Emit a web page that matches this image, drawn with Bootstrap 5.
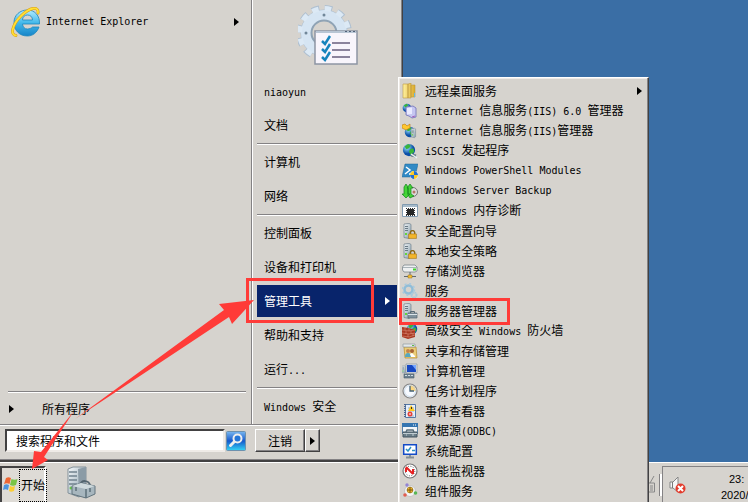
<!DOCTYPE html>
<html lang="zh-CN">
<head>
<meta charset="utf-8">
<meta name="viewport" content="width=device-width, initial-scale=1">
<title>开始菜单</title>
<link href="https://cdn.jsdelivr.net/npm/bootstrap@5.3.0/dist/css/bootstrap.min.css" rel="stylesheet">
<style>
:root{--face:#d6d3ce;--navy:#08246b;--dark:#424142;--shade:#848284;--red:#ff3b38}
body{background:#3a6ea5;color:#000;font-family:"Noto Sans CJK SC","Liberation Sans",sans-serif;font-size:12px;line-height:20px}
a,a:hover{color:inherit;text-decoration:none}
.en{font-family:"DejaVu Sans Mono",monospace;font-size:10px;white-space:pre}
.start-menu{width:403px;background:var(--face);border-right:1px solid var(--dark);border-bottom:2px solid var(--dark);box-shadow:inset -1px -1px var(--shade)}
.programs{width:253px;border-right:1px solid #fff;box-shadow:inset -1px 0 var(--shade);padding-right:6px}
.rule{height:2px;background:var(--shade);border-bottom:1px solid #fff;flex:none}
.places{padding:0 5px 0 4px}
.places .rule{margin-top:1px}
.place{height:32px;margin:1px 0;padding:0 7px;line-height:32px}
.place:hover,.place.chosen{background:var(--navy);color:#fff}
.user-tile{height:74px;padding:4px 0 0 41px}
.tri{width:0;height:0;border:4px solid transparent;border-left:5px solid currentColor;border-right:0}
.ie-row{padding:6px 7px 0 11px;gap:5px}
.all-row{height:31px;padding-left:9px;gap:28px}
.search-row{height:34px;padding:3px 0 0 5px}
.find{height:23px;border:2px solid;border-color:var(--dark) #efebe7 #efebe7 var(--dark);border-radius:0;background:#fff;padding:0 9px;font-size:12px;line-height:18px;color:#000}
.find::placeholder{color:#000;opacity:1}
.raised{background:var(--face);border:1px solid;border-color:#fff var(--dark) var(--dark) #fff;box-shadow:inset -1px -1px var(--shade);border-radius:0;font-size:12px;line-height:18px;color:#000;height:23px;padding:0}
.search-box{width:242px}
.find-btn{background:none;border:0;padding:0;line-height:0}
.taskbar{height:40px;background:var(--face);border-top:1px solid #fff;padding-top:3px}
.start-btn{width:46px;border:2px solid;border-color:var(--dark) #fff #fff var(--dark);border-bottom:0;background:#dedbd6;padding:1px 0 0 1px;color:#000}
.start-btn .face{border:1px dotted #000;height:33px;line-height:30px;padding:0 1px;font-size:12px}
.tray{width:86px;border:1px solid var(--shade);border-width:1px 0 0 1px;padding-left:6px}
.clock{font:11px/16px "Liberation Sans",sans-serif;padding-left:35px;white-space:nowrap}
.grip{width:3px;height:22px;border-left:1px solid var(--shade);border-right:2px solid #fff}
.tools{left:398px;top:77px;width:251px;z-index:5;background:var(--face);border:1px solid;border-color:#fff var(--dark) var(--dark) #fff;box-shadow:inset -1px 0 var(--shade),inset 1px 1px #efebe7;padding:3px 6px 3px 3px}
.tools a{height:20px;gap:7px;white-space:nowrap}
.tools svg{flex:none}
.notes{left:0;top:0;z-index:9;pointer-events:none}
</style>
<script src="https://cdn.jsdelivr.net/npm/bootstrap@5.3.0/dist/js/bootstrap.bundle.min.js"></script>
</head>
<body class="vh-100 overflow-hidden position-relative d-flex flex-column">
<svg width="0" height="0" class="position-absolute" aria-hidden="true">
<defs>
<linearGradient id="steel" x2="1" y2="1"><stop stop-color="#f4f7f9"/><stop offset="1" stop-color="#829aa8"/></linearGradient>
<linearGradient id="sky" x2="0" y2="1"><stop stop-color="#b4ecff"/><stop offset=".5" stop-color="#42b8ea"/><stop offset="1" stop-color="#1784c8"/></linearGradient>
<linearGradient id="gold" x2="1"><stop stop-color="#fff2a0"/><stop offset="1" stop-color="#dba928"/></linearGradient>
<radialGradient id="earth" cx=".35" cy=".3"><stop stop-color="#9ee8ff"/><stop offset="1" stop-color="#0b4fa8"/></radialGradient>
<symbol id="tower" viewBox="0 0 16 16"><path fill="url(#steel)" stroke="#70818c" stroke-width=".7" d="M2 1l5-.6 2 1V14l-2 1.500-5-1z"/><path stroke="#6a7b86" d="M3 3.500h3M3 5.500h3M3 7.500h3"/><path fill="#64d53c" d="M3 10h2v2H3z"/></symbol>
<symbol id="globe" viewBox="0 0 16 16"><circle cx="8" cy="8" r="7" fill="url(#earth)"/><path fill="#38b43a" d="M3 4l4-3 3 2-2 3-3 1zM9 7l4-1 1 4-4 4-2-4z"/></symbol>
<symbol id="lock" viewBox="0 0 8 8"><path d="M2 4V2.500a2 2 0 014 0V4" fill="none" stroke="#8b6914" stroke-width="1.200"/><path fill="#f2b62c" stroke="#a2710e" stroke-width=".5" d="M.5 3.500h7v4h-7z"/></symbol>
</defs></svg>

<main class="start-menu flex-grow-1 position-relative d-flex flex-column">
<div class="d-flex flex-grow-1">
<nav class="programs d-flex flex-column flex-shrink-0" aria-label="程序">
<a href="#" class="ie-row d-flex align-items-center">
<svg width="30" height="32" viewBox="0 0 30 32"><path fill="url(#sky)" stroke="#1d87bd" stroke-width=".8" fill-rule="evenodd" d="M28.500 18H11.500c.3 3 2 5 5 5 2 0 4-1 5-2h6.500c-2 5.500-6 9-11.500 9C8 30 3 24 3 16.500S9 4 16.500 4 29 10 28.500 18zM11.500 14h10c0-3-2-5-5-5s-5 2-5 5z"/><path fill="none" stroke="#d99a10" stroke-width="2.800" stroke-linecap="round" d="M5 29.500C-1 29 1 19 10 10S28 0 27 7"/><path fill="none" stroke="#ffdf35" stroke-width="1.800" stroke-linecap="round" d="M5 29.500C-1 29 1 19 10 10S28 0 27 7"/></svg>
<span class="en flex-grow-1">Internet Explorer</span><i class="tri"></i></a>
<div class="rule mt-auto ms-2"></div>
<a href="#" class="all-row d-flex align-items-center"><i class="tri"></i><span>所有程序</span></a>
</nav>
<nav class="places flex-grow-1 d-flex flex-column" aria-label="系统位置">
<div class="user-tile"><svg width="62" height="64" viewBox="0 0 62 64"><g transform="translate(26 29)"><circle r="18" fill="none" stroke="#aebfd0" stroke-width="11"/><circle r="25" fill="none" stroke="#aebfd0" stroke-width="6" stroke-dasharray="7.500 5.590"/><circle r="18" fill="none" stroke="#d6e5f3" stroke-width="10"/><circle r="24.500" fill="none" stroke="#dce9f5" stroke-width="5" stroke-dasharray="6.500 6.330"/><circle r="12.500" fill="none" stroke="#8fa3b5" stroke-width="2"/><g fill="#718799"><circle cx="-18" r="1.500"/><circle cy="-18" r="1.500"/></g></g><path fill="#f8f5fc" stroke="#8d95a4" stroke-width="1.500" d="M17 27h42v33H17z"/><path stroke="#b8c5d4" stroke-width="2" d="M18 28h40"/><path stroke="#506078" stroke-dasharray="2 2" d="M47 27.500h11"/><path stroke="#8b849d" stroke-width="2" d="M34 39h18M34 46h18M34 53h18"/><path fill="none" stroke="#1684bc" stroke-width="2.500" d="M24 37l3 3 5-8M24 45l3 3 5-8M24 53l3 3 5-8"/></svg></div>
<a href="#" class="place d-block"><span class="en">niaoyun</span></a>
<a href="#" class="place d-block">文档</a>
<div class="rule"></div>
<a href="#" class="place d-block">计算机</a>
<a href="#" class="place d-block">网络</a>
<div class="rule"></div>
<a href="#" class="place d-block">控制面板</a>
<a href="#" class="place d-block">设备和打印机</a>
<a href="#" class="place chosen d-flex align-items-center justify-content-between"><span>管理工具</span><i class="tri"></i></a>
<a href="#" class="place d-block">帮助和支持</a>
<a href="#" class="place d-block">运行<span class="en">...</span></a>
<div class="rule"></div>
<a href="#" class="place d-block"><span class="en">Windows </span>安全</a>
</nav>
</div>
<div class="rule me-1"></div>
<form class="search-row d-flex align-items-start">
<div class="search-box d-flex"><input class="find flex-grow-1" type="text" placeholder="搜索程序和文件" aria-label="搜索程序和文件" size="10"><button type="button" class="find-btn" aria-label="搜索"><svg width="22" height="22" viewBox="0 0 22 22"><defs><linearGradient id="blue" x2="0" y2="1"><stop stop-color="#7ab8f0"/><stop offset=".5" stop-color="#1458cc"/><stop offset="1" stop-color="#35d5f4"/></linearGradient></defs><rect x="1.500" y="1.500" width="19" height="19" rx="1" fill="url(#blue)" stroke="#6d91ae"/><path stroke="#eee" stroke-width="3" stroke-linecap="round" d="M5.500 15.500l4-4"/><circle cx="12.500" cy="8.500" r="4" fill="#2476d8" stroke="#eee" stroke-width="2"/></svg></button></div>
<div class="d-flex ms-2"><button type="button" class="raised px-2"><span class="px-1">注销</span></button><button type="button" class="raised px-1" aria-label="更多"><i class="tri d-block"></i></button></div>
</form>

<nav class="tools position-absolute" aria-label="管理工具">
<a href="#" class="d-flex align-items-center"><svg width="16" height="16"><path fill="url(#gold)" stroke="#bd9941" stroke-width=".6" d="M1 1h5v14H1zM6 1l3-1v15H6zM9 2h4v12H9z"/><path stroke="#63b7e7" d="M12.500 10v4"/></svg><span class="flex-grow-1">远程桌面服务</span><i class="tri"></i></a>
<a href="#" class="d-flex align-items-center"><svg width="16" height="16"><use href="#globe" width="10" height="10"/><path fill="#c5c6f1" stroke="#6f70b7" stroke-width=".8" d="M4 4l7-1 3 2v9l-4 1-3-2-3-1z"/><path fill="#e9eaff" d="M5 5l5-.5V11l-5 .5z"/><path stroke="#a660bb" d="M10 14l3-1"/></svg><span><span class="en">Internet </span>信息服务<span class="en">(IIS) 6.0 </span>管理器</span></a>
<a href="#" class="d-flex align-items-center"><svg width="16" height="16"><use href="#globe" x="2" y="3" width="12" height="12"/><path fill="#ffc72e" stroke="#b87913" stroke-width=".6" d="M0 2l3-1 2 2 3-2v4L4 7 0 5z"/><use href="#tower" x="8" y="4" width="10" height="12"/></svg><span><span class="en">Internet </span>信息服务<span class="en">(IIS)</span>管理器</span></a>
<a href="#" class="d-flex align-items-center"><svg width="16" height="16"><use href="#globe" width="14" height="14"/><path stroke="#6d7f8b" stroke-width="3" d="M9 12l5 1"/><path stroke="#e9f3f7" stroke-width="1.500" d="M9 11l6 4"/></svg><span><span class="en">iSCSI </span>发起程序</span></a>
<a href="#" class="d-flex align-items-center"><svg width="16" height="16"><path fill="#318ac5" stroke="#1c6795" stroke-width=".5" d="M3 1h13l-3 13H0z"/><path stroke="#fff" stroke-width="1.500" fill="none" d="M4 4l4 3-5 4M7 11h3"/><circle cx="12" cy="12" r="4" fill="#fff"/><path fill="#ffca24" d="M12 8v4H8c0-2 2-4 4-4zM12 16v-4h4c0 2-2 4-4 4z"/><path fill="#256fd1" d="M12 8c2 0 4 2 4 4h-4zM8 12h4v4c-2 0-4-2-4-4z"/></svg><span class="en">Windows PowerShell Modules</span></a>
<a href="#" class="d-flex align-items-center"><svg width="16" height="16"><circle cx="11" cy="9" r="4.500" fill="#ddd" stroke="#777"/><circle cx="12" cy="9" r="1.500" fill="#b77766"/><path fill="#43d436" stroke="#14801c" stroke-width=".7" d="M4 15l-4-4h2V4l2-3 2 3v7h2zM8 1l3 4H9v6l3 2-4 2-2-3V5H5z"/></svg><span class="en">Windows Server Backup</span></a>
<a href="#" class="d-flex align-items-center"><svg width="16" height="16"><path fill="#fff" stroke="#829bb0" d="M.5 1.500h15v12H.5z"/><path stroke="#a8bccb" stroke-width="2" d="M1 3h14"/><path fill="#262626" d="M5 6h7v6H5z"/><path stroke="#333" stroke-dasharray="1 1" d="M4 5.500h9M4 12.500h9M4.500 5v8M12.500 5v8"/></svg><span><span class="en">Windows </span>内存诊断</span></a>
<a href="#" class="d-flex align-items-center"><svg width="16" height="16"><use href="#tower" width="16" height="16"/><use href="#lock" x="6" y="7" width="9" height="9"/></svg>安全配置向导</a>
<a href="#" class="d-flex align-items-center"><svg width="16" height="16"><use href="#tower" width="16" height="16"/><use href="#lock" x="6" y="7" width="9" height="9"/></svg>本地安全策略</a>
<a href="#" class="d-flex align-items-center"><svg width="16" height="16"><path fill="#eef0f1" stroke="#7b858c" stroke-width=".8" d="M2 2h11l2 2v4l-2 1H2L.5 7V4z"/><path stroke="#aab4b9" d="M1 4.500h14"/><path stroke="#3ed42b" stroke-width="2" d="M11 6.500h3"/><path stroke="#606970" d="M8 9v4M2 13.500h12"/><path fill="#f4be36" stroke="#94701c" stroke-width=".5" d="M6 12h4v3H6z"/></svg>存储浏览器</a>
<a href="#" class="d-flex align-items-center"><svg width="16" height="16"><circle cx="6.500" cy="6.500" r="4" fill="none" stroke="#90bdd8" stroke-width="2.500"/><circle cx="6.500" cy="6.500" r="6" fill="none" stroke="#a6cae0" stroke-width="1.500" stroke-dasharray="2 2.700"/><circle cx="12" cy="12" r="2.500" fill="none" stroke="#a9c9db" stroke-width="2" stroke-dasharray="1.500 .5"/></svg>服务</a>
<a href="#" class="d-flex align-items-center"><svg width="16" height="16"><use href="#tower" width="16" height="16"/><path fill="#81939d" stroke="#566873" stroke-width=".7" d="M6 10h9v5H6z"/><path fill="none" stroke="#566873" d="M8.500 10V8.500h4V10"/><path stroke="#dce5e9" d="M6 11.500h9"/></svg>服务器管理器</a>
<a href="#" class="d-flex align-items-center"><svg width="16" height="16"><use href="#globe" x="4" width="12" height="12"/><path fill="#a93a24" d="M0 4l7 1 6 2v7l-7 2-6-2z"/><path fill="none" stroke="#e09a84" stroke-width=".5" d="M0 7l7 1 6-1M0 10l7 1 6-1M0 13l7 1 6-2M3 4v3M7 5v3M4 8v3M9 8v3M6 11v3M11 10v3"/></svg><span>高级安全<span class="en"> Windows </span>防火墙</span></a>
<a href="#" class="d-flex align-items-center"><svg width="16" height="16"><path fill="#ebcd78" stroke="#b88d2d" stroke-width=".7" d="M2 4h12l1 11H3z"/><path fill="#e4e8ea" stroke="#919ba0" stroke-width=".7" d="M1 1h12v3H1z"/><path fill="#60bc48" d="M10 2h2v1h-2z"/><circle cx="6" cy="8" r="2" fill="#c3834e"/><circle cx="10" cy="8" r="2" fill="#a66335"/><path fill="#55a7c0" d="M3 14c0-3 1-4 3-4s3 1 3 4z"/><path fill="#fff" d="M9 14l-1-3 2-1 3 3v1z"/></svg>共享和存储管理</a>
<a href="#" class="d-flex align-items-center"><svg width="16" height="16"><path fill="#e1e4e7" stroke="#87929e" stroke-width=".7" d="M4 1h11v9H4z"/><path fill="#1748c3" d="M5 2h9v7H5z"/><path fill="#75a6ff" d="M10 2h4v5z"/><use href="#tower" x="-1" y="1" width="8" height="11"/><path fill="#6d8190" stroke="#4c606d" stroke-width=".6" d="M2 11h10v4H2z"/><path stroke="#d0dce3" stroke-dasharray="2 1" d="M3 12.500h8"/></svg>计算机管理</a>
<a href="#" class="d-flex align-items-center"><svg width="16" height="16"><circle cx="8" cy="8" r="7" fill="#f7faff" stroke="#858585" stroke-width="1.200"/><path fill="#ffd77d" d="M8 2a6 6 0 016 6H8z"/><circle cx="8" cy="8" r="5.500" fill="none" stroke="#b8ccdb" stroke-width=".7"/><path stroke="#416176" stroke-width="1.300" fill="none" d="M8 3v5h4"/></svg>任务计划程序</a>
<a href="#" class="d-flex align-items-center"><svg width="16" height="16"><path fill="#e4eefb" stroke="#5679a5" d="M3.500 1.500h10v13h-10z"/><path stroke="#4b6690" stroke-width="2" stroke-dasharray="1 1" d="M3 1v14"/><path stroke="#9dafc5" d="M6 5h6M6 8h6M6 13h6"/><path fill="#ffc81e" d="M9 2l4 6H6z"/><path stroke="#333" d="M9.500 4v2"/><circle cx="8" cy="11" r="2.500" fill="#e54238"/><path stroke="#fff" d="M7 11h2"/></svg>事件查看器</a>
<a href="#" class="d-flex align-items-center"><svg width="16" height="16"><path fill="#f2f6fa" stroke="#376894" stroke-width=".8" d="M.5.5h15v10H.5z"/><path fill="#3475b1" d="M0 0h16v4H0z"/><path stroke="#fff" d="M11 2h1M13 2h1"/><path fill="#6b7e88" stroke="#425560" d="M1 9h14v5H1z"/><path fill="none" stroke="#596d78" stroke-width="1.500" d="M4 9l1-2h6l1 2"/><path stroke="#c0ccd1" d="M1 10.500h14M4 12h1M10 12h2"/></svg><span>数据源<span class="en">(ODBC)</span></span></a>
<a href="#" class="d-flex align-items-center"><svg width="16" height="16"><path fill="#fff" stroke="#144bc7" stroke-width="1.500" d="M1.700 1.700h12.600v9.600H1.700z"/><path fill="none" stroke="#2e92c4" stroke-width="1.500" d="M4 6l2 2 3-4M10 7.500h3"/><path stroke="#859097" stroke-width="2" d="M8 12v2M4 14.500h8"/></svg>系统配置</a>
<a href="#" class="d-flex align-items-center"><svg width="16" height="16"><circle cx="8" cy="8" r="7" fill="#fff" stroke="#777" stroke-width="1.200"/><circle cx="8" cy="8" r="4.800" fill="none" stroke="#555" stroke-dasharray="1 1.500"/><path stroke="#e42222" stroke-width="2" fill="none" d="M4 4l7 7M4 9V5M11 6v5"/></svg>性能监视器</a>
<a href="#" class="d-flex align-items-center"><svg width="16" height="16"><circle cx="8" cy="8" r="5.500" fill="#f4f4f5" stroke="#c5c5c5"/><circle cx="8" cy="7" r="3" fill="#edb32c" stroke="#94701b" stroke-width=".6"/><path stroke="#795911" d="M8 4v6M5 7h6"/><circle cx="5" cy="2" r="1.700" fill="#9284d4"/><circle cx="13.500" cy="10" r="1.800" fill="#57b756"/><circle cx="3" cy="12" r="1.800" fill="#e15e50"/></svg>组件服务</a>
</nav>
</main>

<footer class="taskbar d-flex">
<button type="button" class="start-btn d-flex align-items-start"><svg class="mt-2 flex-shrink-0" width="16" height="17" viewBox="0 1 16 17"><path fill="#ed6634" d="M3 2c2-1 3-1 5 0L6.500 8C5 7 3 7 1 8z"/><path fill="#7ac547" d="M8.500 3c2 1 4 1 6 0L13 9c-2 1-4 1-6 0z"/><path fill="#4c94dd" d="M1 9c2-1 3-1 5 0l-1 5c-2-1-3-1-5 0z"/><path fill="#fbcd34" d="M7 10c2 1 3 1 5 0l-1 5c-2 1-4 1-5 0z"/></svg><span class="face text-nowrap">开始</span></button>
<a href="#" class="ms-4 ps-0" aria-label="服务器管理器"><svg width="27" height="33" viewBox="0 0 27 33" class="overflow-visible"><path fill="url(#steel)" stroke="#84919a" d="M-2 3L3 1h13v25l-7 5-11-4z"/><path fill="#8b9ba6" d="M8 3l8-2v25l-7 5z"/><path stroke="#71838f" stroke-width="1.500" d="M-1 6h8M-1 10h8M-1 14h8M-1 18h8"/><circle cx="1" cy="22" r="1.500" fill="#67c746"/><path fill="none" stroke="#53656f" stroke-width="2" d="M10 20c0-7 10-6 10 0"/><path fill="#a7b6be" stroke="#62747e" d="M2 20l9-3 14 3v8l-9 4-14-4z"/><path fill="#cfdadd" d="M2 20l9-3 14 3-9 3z"/><path stroke="#5d7079" stroke-width="1.500" d="M16 23v9M6 21v4M20 22v4"/></svg></a>
<svg class="ms-auto mt-2" width="13" height="27"><path stroke="#888" fill="none" d="M5.500 9h7v9h-7zM8 12h3M8 14h3M8 16h3M8 9l4-7"/></svg>
<div class="grip ms-1 me-0 mt-2"></div>
<div class="tray d-flex overflow-hidden"><svg class="mt-2 flex-shrink-0" width="17" height="23" viewBox="0 0 17 23"><path fill="#f5f5f5" stroke="#858585" d="M1 7h3l5-5v15l-5-4H1z"/><path stroke="#777" d="M3.500 7v6"/><circle cx="11.500" cy="13.500" r="5" fill="#e33b2c"/><path stroke="#fff" stroke-width="2" d="M9 11l5 5M14 11l-5 5"/></svg><div class="clock pt-1"><div class="ps-2">23:</div><div>2020/</div></div></div>
</footer>

<svg class="notes position-absolute" width="520" height="480" aria-hidden="true"><g fill="none" stroke="#ff3b38" stroke-width="3"><path d="M247.500 279.500h125v42h-125z"/><path d="M400.500 299.500h108v24h-108z"/></g><g fill="#ff3b38"><path d="M75 419L229 317l3 7 22-24-35 4 5 6z"/><path d="M74 411L41 452l-7-1-2 18 16-9-4-3z"/></g></svg>
</body>
</html>
